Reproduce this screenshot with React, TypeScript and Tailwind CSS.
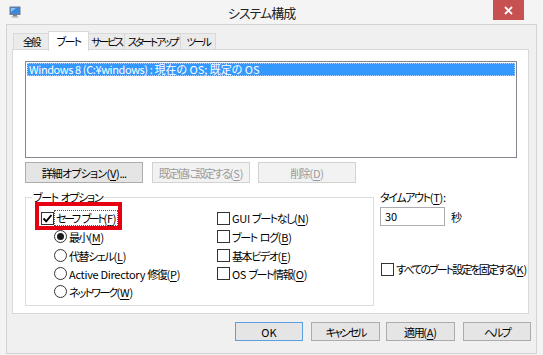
import React from "react";

function Check({ checked = false }: { checked?: boolean }) {
  return (
    <span className="w-[13px] h-[13px] shrink-0 border border-[#333333] bg-white flex items-center justify-center">
      {checked && (
        <svg width="11" height="11" viewBox="0 0 11 11">
          <path d="M1.5 5.5 L4.2 8.3 L9.5 2" fill="none" stroke="#000" strokeWidth="1.9" />
        </svg>
      )}
    </span>
  );
}

function Radio({ checked = false }: { checked?: boolean }) {
  return (
    <span className="w-[13px] h-[13px] shrink-0 rounded-full border border-[#333333] bg-white flex items-center justify-center">
      {checked && <span className="w-[7px] h-[7px] rounded-full bg-[#1a1a1a]" />}
    </span>
  );
}

function K({ k }: { k: string }) {
  return (
    <span className="tracking-[-0.2px]">
      (<span className="underline underline-offset-[2px]">{k}</span>)
    </span>
  );
}

function L({ children }: { children: React.ReactNode }) {
  return <span className="tracking-[-0.3px]">{children}</span>;
}

function S() {
  return <span className="inline-block w-[3px]" />;
}

function Tab({ children, sel = false, w }: { children: React.ReactNode; sel?: boolean; w: string }) {
  if (sel) {
    return (
      <div className={`${w} h-[20px] -ml-px mb-[-2px] relative z-10 bg-white border border-b-0 border-[#d9d9d9] flex justify-center pt-[2px] whitespace-nowrap tracking-[-1.6px]`}>
        {children}
      </div>
    );
  }
  return (
    <div className={`${w} h-[16px] -ml-px bg-[#ebebeb] border border-b-0 border-[#d9d9d9] flex items-center justify-center pt-[1px] whitespace-nowrap text-[10.5px] tracking-[-2.2px]`}>
      {children}
    </div>
  );
}

export default function App() {
  return (
    <div className="w-[543px] h-[355px] bg-[#f4f4f4] flex flex-col overflow-hidden text-[11px] leading-[14px] tracking-[-1.4px] text-black font-['Noto_Sans_CJK_JP','Noto_Sans',sans-serif] [font-feature-settings:'palt']">
      {/* title bar */}
      <div className="h-[24px] flex shrink-0">
        <div className="w-[40px] pl-[9px] pt-[6px]">
          <svg width="12" height="12" viewBox="0 0 12 12">
            <rect x="0.5" y="0.5" width="11" height="8.5" fill="#6f7c8c" />
            <rect x="1.5" y="1.5" width="9" height="6.5" fill="#3d86d8" />
            <path d="M2 2 L7 2 L2 6 Z" fill="#8cc4f5" />
            <rect x="4" y="9" width="4" height="1.5" fill="#7d8794" />
            <rect x="2.5" y="10.5" width="7" height="1" fill="#9aa3ad" />
          </svg>
        </div>
        <div className="flex-1 text-center pt-[5px] text-[13px] leading-[16px] tracking-[-1px] text-[#222]">システム構成</div>
        <div className="w-[60px] pl-[10px]">
          <div className="w-[31px] h-[20px] bg-[#c75050] flex items-center justify-center">
            <svg width="9" height="9" viewBox="0 0 9 9">
              <path d="M1 1 L8 8 M8 1 L1 8" stroke="#fff" strokeWidth="1.8" />
            </svg>
          </div>
        </div>
      </div>

      {/* client area */}
      <div className="mx-[6px] h-[330px] bg-[#f0f0f0] border border-[#d3d3d3] flex flex-col">
        {/* tabs */}
        <div className="flex items-end h-[18px] mt-[6px] pl-[7px]">
          <Tab w="w-[36px]">全般</Tab>
          <Tab sel w="w-[41px]">ブート</Tab>
          <Tab w="w-[37px]">サービス</Tab>
          <Tab w="w-[57px]">スタートアップ</Tab>
          <Tab w="w-[36px]">ツール</Tab>
        </div>

        {/* panel */}
        <div className="ml-[5px] w-[517px] h-[265px] bg-white border border-[#d9d9d9] flex flex-col">
          {/* list */}
          <div className="ml-[12px] mt-[11px] w-[492px] h-[97px] border border-[#828790] p-px">
            <div className="h-[13px] bg-[#3399ff] text-white leading-[13px] pl-[2px] outline outline-1 outline-dotted outline-[#a8d0ff] -outline-offset-1 whitespace-nowrap">
              <span className="tracking-[-0.4px]">Windows 8 (C:¥windows) : </span>
              <span className="tracking-[0px]">現在の OS; 既定の OS</span>
            </div>
          </div>

          {/* buttons */}
          <div className="flex ml-[12px] mt-[4px] whitespace-nowrap">
            <div className="w-[118px] h-[21px] bg-[#e5e5e5] border border-[#acacac] flex items-center justify-center tracking-[-0.8px]">
              詳細オプション<K k="V" />...
            </div>
            <div className="w-[98px] h-[21px] ml-[9px] bg-[#f2f2f2] border border-[#d2d2d2] text-[#9a9a9a] flex items-center justify-center tracking-[-1.8px]">
              既定値に設定する<K k="S" />
            </div>
            <div className="w-[98px] h-[21px] ml-[8px] bg-[#f2f2f2] border border-[#d2d2d2] text-[#9a9a9a] flex items-center justify-center">
              削除<K k="D" />
            </div>
          </div>

          {/* options */}
          <div className="flex ml-[12px] mt-[7px]">
            <fieldset className="w-[349px] h-[116px] shrink-0 border border-[#dcdcdc]">
              <legend className="ml-[6px] px-[1px] leading-[14px]">ブート<S />オプション</legend>
              <div className="grid grid-cols-[176px_1fr] grid-rows-[18px_19px_19px_17px_19px] items-center pl-[15px] pt-[5px] whitespace-nowrap">
                <div className="flex items-center relative">
                  <Check checked />
                  <span className="ml-[1px] px-[1px] outline outline-1 outline-dotted outline-[#555] tracking-[-2.4px]">
                    セーフ<S />ブート<K k="F" />
                  </span>
                  <div className="absolute left-[-6px] top-[-9px] w-[87px] h-[28px] border-[4px] border-[#e60012]" />
                </div>
                <div className="flex items-center">
                  <Check />
                  <span className="ml-[2px]"><L>GUI </L>ブートなし<K k="N" /></span>
                </div>

                <div className="flex items-center ml-[13px]">
                  <Radio checked />
                  <span className="ml-[2px]">最小<K k="M" /></span>
                </div>
                <div className="flex items-center">
                  <Check />
                  <span className="ml-[2px]">ブート<S />ログ<K k="B" /></span>
                </div>

                <div className="flex items-center ml-[13px]">
                  <Radio />
                  <span className="ml-[2px]">代替シェル<K k="L" /></span>
                </div>
                <div className="flex items-center">
                  <Check />
                  <span className="ml-[2px]">基本ビデオ<K k="E" /></span>
                </div>

                <div className="flex items-center ml-[13px]">
                  <Radio />
                  <span className="ml-[2px]"><L>Active Directory </L>修復<K k="P" /></span>
                </div>
                <div className="flex items-center">
                  <Check />
                  <span className="ml-[2px]"><L>OS </L>ブート情報<K k="O" /></span>
                </div>

                <div className="flex items-center ml-[13px]">
                  <Radio />
                  <span className="ml-[2px] tracking-[-1.8px]">ネットワーク<K k="W" /></span>
                </div>
                <div />
              </div>
            </fieldset>

            <div className="ml-[6px] flex flex-col whitespace-nowrap">
              <div className="h-[14px]">タイムアウト<K k="T" />:</div>
              <div className="flex items-center mt-[3px]">
                <div className="w-[65px] h-[19px] border border-[#abadb3] bg-white pl-[4px] leading-[17px] tracking-normal">30</div>
                <span className="ml-[6px]">秒</span>
              </div>
              <div className="flex items-center mt-[36px] ml-[1px]">
                <Check />
                <span className="ml-[2px] tracking-[-1.9px]">すべてのブート設定を固定する<K k="K" /></span>
              </div>
            </div>
          </div>
        </div>

        {/* bottom buttons */}
        <div className="flex justify-end pr-[5px] mt-[8px] whitespace-nowrap">
          <div className="w-[68px] h-[19px] bg-[#e5e5e5] border border-[#5a9fe0] flex items-center justify-center tracking-normal">OK</div>
          <div className="w-[69px] h-[19px] ml-[8px] bg-[#e5e5e5] border border-[#acacac] flex items-center justify-center tracking-[-2px]">キャンセル</div>
          <div className="w-[69px] h-[19px] ml-[6px] bg-[#e5e5e5] border border-[#acacac] flex items-center justify-center">
            適用<K k="A" />
          </div>
          <div className="w-[68px] h-[19px] ml-[8px] bg-[#e5e5e5] border border-[#acacac] flex items-center justify-center tracking-[-1.8px]">ヘルプ</div>
        </div>
      </div>
    </div>
  );
}
